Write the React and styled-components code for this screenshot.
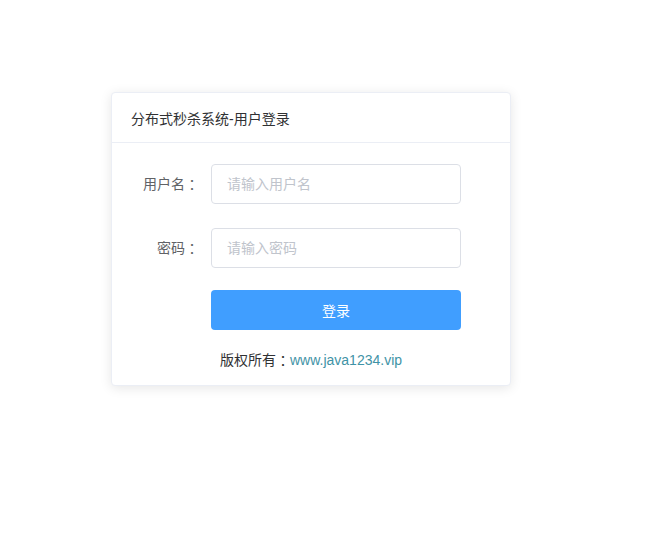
import React from "react";
import styled, { createGlobalStyle } from "styled-components";

const GlobalStyle = createGlobalStyle`
  body {
    margin: 0;
    background: #ffffff;
    font-family: "Liberation Sans", "Noto Sans CJK SC", sans-serif;
  }
  * { box-sizing: border-box; }
`;

const App = () => {
  return (
    <>
      <GlobalStyle />
      <Page>
        <Card>
          <CardHeader>分布式秒杀系统-用户登录</CardHeader>
          <CardBody>
            <FormItem>
              <Label>用户名<Colon>：</Colon></Label>
              <Input type="text" placeholder="请输入用户名" />
            </FormItem>
            <FormItem>
              <Label>密码<Colon>：</Colon></Label>
              <Input type="password" placeholder="请输入密码" />
            </FormItem>
            <FormItem $last>
              <Label />
              <LoginButton type="button">登录</LoginButton>
            </FormItem>
            <Footer>
              版权所有<Colon>：</Colon><FooterLink href="#">www.java1234.vip</FooterLink>
            </Footer>
          </CardBody>
        </Card>
      </Page>
    </>
  );
};

const Page = styled.div`
  padding: 92px 0 0 111px;
  min-height: 559px;
`;

const Card = styled.div`
  width: 400px;
  border: 1px solid #ebeef5;
  border-radius: 4px;
  background: #fff;
  box-shadow: 0 2px 12px 0 rgba(0, 0, 0, 0.1);
  overflow: hidden;
`;

const CardHeader = styled.div`
  height: 50px;
  display: flex;
  align-items: center;
  padding: 0 19px;
  border-bottom: 1px solid #ebeef5;
  font-size: 14px;
  color: #303133;
`;

const CardBody = styled.div`
  padding: 21px 20px 15px;
`;

const FormItem = styled.div`
  display: flex;
  align-items: center;
  height: 40px;
  margin-bottom: ${(p) => (p.$last ? "20px" : "24px")};
  margin-top: ${(p) => (p.$last ? "-2px" : "0")};
`;

const Label = styled.label`
  width: 79px;
  height: 40px;
  flex-shrink: 0;
  padding-right: 12px;
  text-align: right;
  line-height: 40px;
  font-size: 14px;
  color: #606266;
`;

/* full-width colon drawn centred in its box, as in the original font */
const Colon = styled.span`
  display: inline-block;
  vertical-align: top;
  font-family: "Noto Sans CJK TC", sans-serif;
`;

const Input = styled.input`
  width: 250px;
  height: 40px;
  padding: 0 15px;
  border: 1px solid #dcdfe6;
  border-radius: 4px;
  font-family: inherit;
  font-size: 14px;
  color: #606266;
  outline: none;

  &::placeholder {
    color: #c0c4cc;
  }
`;

const LoginButton = styled.button`
  width: 250px;
  height: 40px;
  border: none;
  border-radius: 4px;
  background: #409eff;
  color: #fff;
  font-family: inherit;
  font-size: 14px;
  cursor: pointer;
`;

const Footer = styled.div`
  height: 20px;
  text-align: center;
  line-height: 20px;
  font-size: 14px;
  color: #303133;
`;

const FooterLink = styled.a`
  color: #3f93a6;
  text-decoration: none;
`;

export default App;
